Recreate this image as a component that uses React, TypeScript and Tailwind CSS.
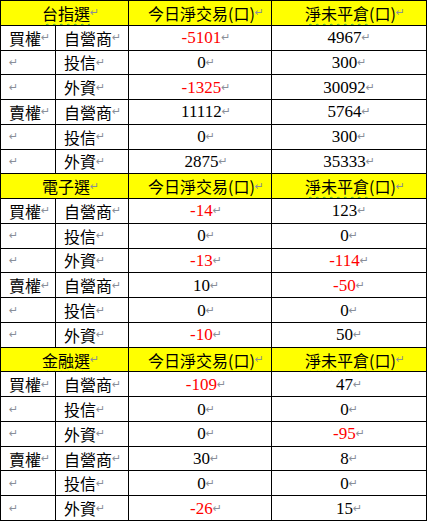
import React from "react";

type Row = {
  side: string;
  who: string;
  today: number;
  open: number;
};

type Section = {
  title: string;
  squiggle: boolean;
  rows: Row[];
};

const sections: Section[] = [
  {
    title: "台指選",
    squiggle: true,
    rows: [
      { side: "買權", who: "自營商", today: -5101, open: 4967 },
      { side: "", who: "投信", today: 0, open: 300 },
      { side: "", who: "外資", today: -1325, open: 30092 },
      { side: "賣權", who: "自營商", today: 11112, open: 5764 },
      { side: "", who: "投信", today: 0, open: 300 },
      { side: "", who: "外資", today: 2875, open: 35333 },
    ],
  },
  {
    title: "電子選",
    squiggle: false,
    rows: [
      { side: "買權", who: "自營商", today: -14, open: 123 },
      { side: "", who: "投信", today: 0, open: 0 },
      { side: "", who: "外資", today: -13, open: -114 },
      { side: "賣權", who: "自營商", today: 10, open: -50 },
      { side: "", who: "投信", today: 0, open: 0 },
      { side: "", who: "外資", today: -10, open: 50 },
    ],
  },
  {
    title: "金融選",
    squiggle: true,
    rows: [
      { side: "買權", who: "自營商", today: -109, open: 47 },
      { side: "", who: "投信", today: 0, open: 0 },
      { side: "", who: "外資", today: 0, open: -95 },
      { side: "賣權", who: "自營商", today: 30, open: 8 },
      { side: "", who: "投信", today: 0, open: 0 },
      { side: "", who: "外資", today: -26, open: 15 },
    ],
  },
];

const cjk = "font-['Noto_Sans_CJK_TC','Noto_Sans_CJK_SC',sans-serif] text-[16px] text-black";
const num = "font-['Liberation_Serif','Times_New_Roman',serif] text-[17px]";
const wavy = "underline decoration-wavy decoration-[#3fae3f] decoration-1 underline-offset-[3px]";

// Word paragraph mark
function Mark() {
  return (
    <span className="font-['DejaVu_Sans',sans-serif] text-[11px] leading-none text-[#8a8f99]">
      ↵
    </span>
  );
}

const cell = "flex items-center leading-none whitespace-nowrap overflow-hidden";

export default function App() {
  return (
    <div className="w-[428px] h-[521px] bg-white">
      <div className="grid grid-cols-[54px_72px_142px_154px] grid-rows-[repeat(21,minmax(0,1fr))] gap-px p-px bg-black w-[427px] h-[521px]">
        {sections.map((s) => (
          <React.Fragment key={s.title}>
            <div className={`${cell} col-span-2 bg-[#ffff00] ${cjk}`}>
              <div className="w-[41px] shrink-0" />
              <span className={s.squiggle ? wavy : ""}>{s.title}</span>
              <Mark />
            </div>
            <div className={`${cell} justify-start pl-[19px] bg-[#ffff00] ${cjk}`}>
              今日淨交易(口)
              <Mark />
            </div>
            <div className={`${cell} justify-start pl-[33px] bg-[#ffff00] ${cjk}`}>
              <span className={wavy}>淨未平倉</span>
              (口)
              <Mark />
            </div>
            {s.rows.map((r, i) => (
              <React.Fragment key={i}>
                <div className={`${cell} pl-[8px] bg-white ${cjk}`}>
                  {r.side}
                  <Mark />
                </div>
                <div className={`${cell} pl-[8px] bg-white ${cjk}`}>
                  {r.who}
                  <Mark />
                </div>
                <div className={`${cell} justify-center pl-[12px] bg-white ${num} ${r.today < 0 ? "text-[#ff0000]" : "text-black"}`}>
                  {r.today}
                  <Mark />
                </div>
                <div className={`${cell} justify-center bg-white ${num} ${r.open < 0 ? "text-[#ff0000]" : "text-black"}`}>
                  {r.open}
                  <Mark />
                </div>
              </React.Fragment>
            ))}
          </React.Fragment>
        ))}
      </div>
    </div>
  );
}
